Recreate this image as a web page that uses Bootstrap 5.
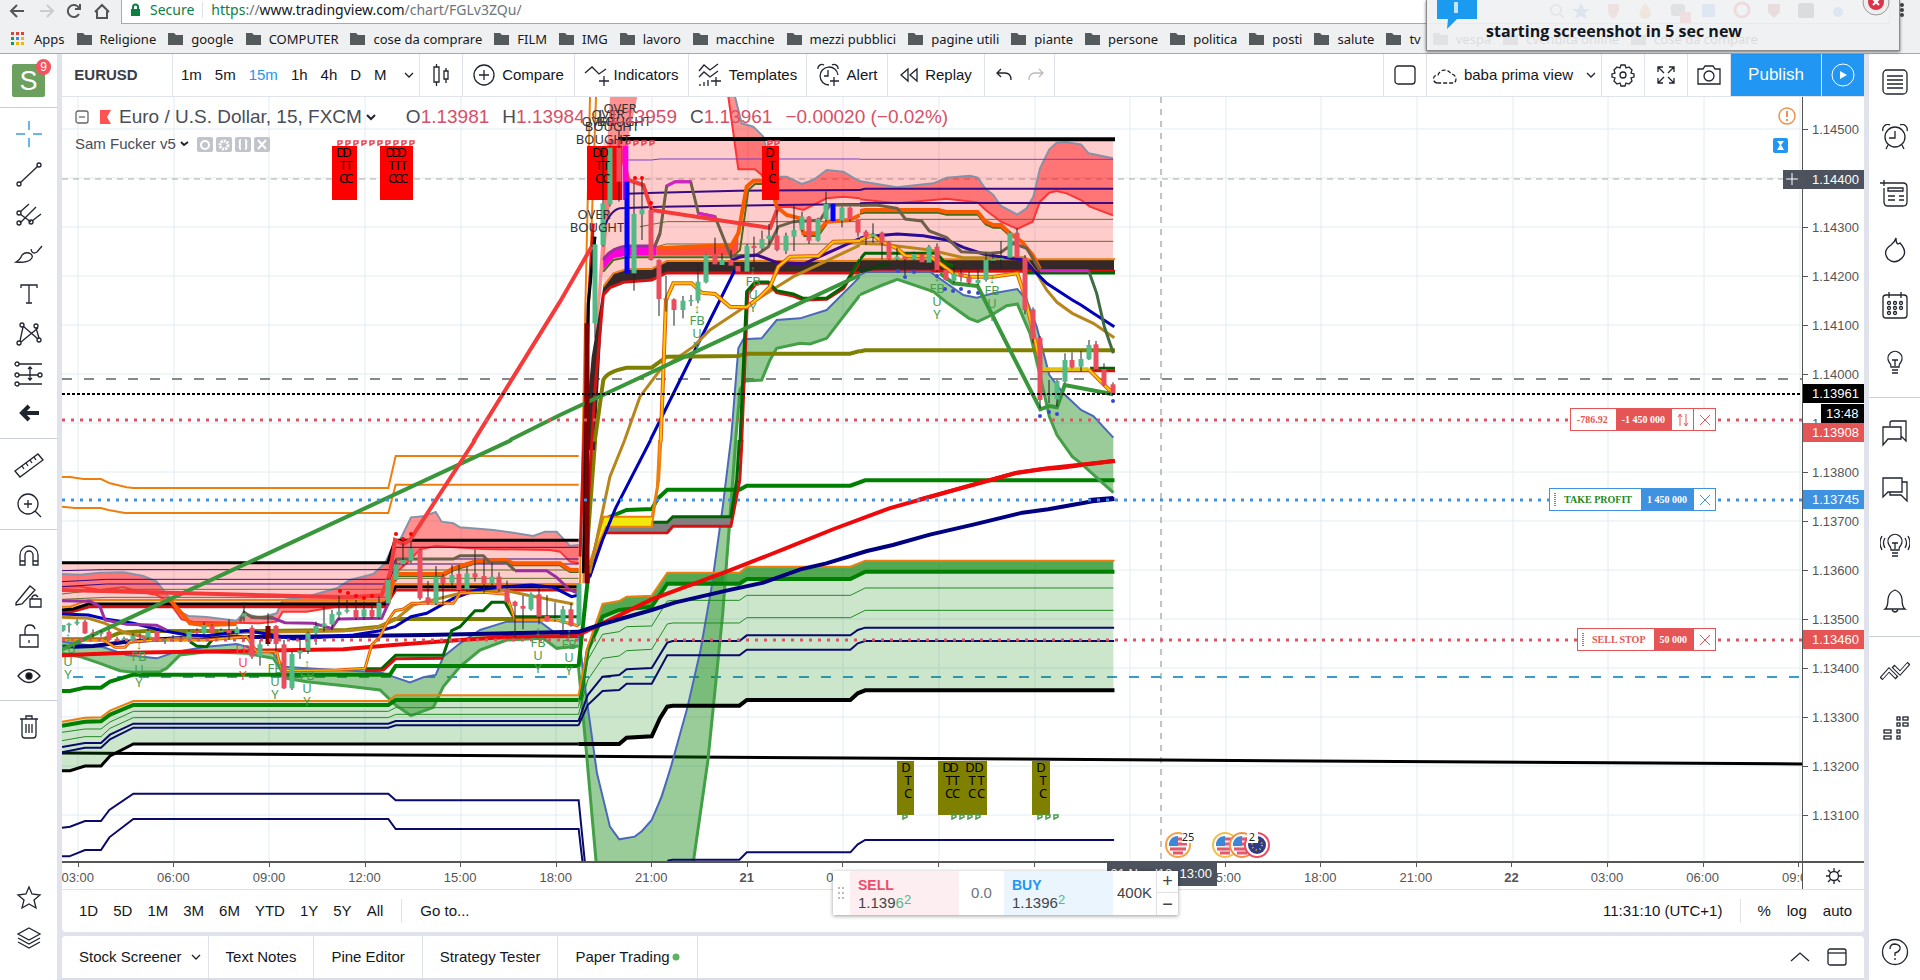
<!DOCTYPE html>
<html lang="en">
<head>
<meta charset="utf-8">
<meta name="viewport" content="width=device-width, initial-scale=1">
<title>EURUSD 1.13961</title>
<link rel="stylesheet" href="https://cdn.jsdelivr.net/npm/bootstrap@5.3.0/dist/css/bootstrap.min.css">
<style>
:root{--gap:#e0e3eb;--ink:#131722;--blue:#2196f3;--up:#53b987;--down:#eb4d5c}
body{font-family:"Liberation Sans",Arial,sans-serif;font-size:15px;line-height:20px;color:var(--ink);background:var(--gap);overflow:hidden}
button{background:none;border:0;padding:0;color:inherit;display:inline-flex;align-items:center;justify-content:center;white-space:nowrap}
svg.ic{fill:none;stroke:#20242f;stroke-width:1.3;flex:none}
/* browser */
.chrome-bar{font-family:"Noto Sans",sans-serif;height:54px;background:#eff0f1;border-bottom:1px solid #a9a9a9}
.address{height:24px;background:#fff;border:1px solid #a9a9a9;border-top:0;margin-left:11px;font-size:14px;padding-bottom:4px}
.address input{border:0;outline:0;background:none;color:transparent;width:1px;padding:0}
.navs{width:110px;padding-left:8px}
.marks{font-size:13px;height:29px;padding-left:11px}
.marks a{color:#16181c;text-decoration:none;white-space:nowrap;display:flex;align-items:center;gap:8px;margin-right:12px}
.notice{right:20px;top:0;width:474px;height:51px;background:rgba(239,241,242,.9);border:1px solid #8b8b8b;border-top:0;box-shadow:0 1px 3px #0008;font-family:"Open Sans",sans-serif;font-weight:700;font-size:16px;z-index:9}
.notice span{left:59px;top:21px}
/* sidebars */
.rail-l{width:57px;background:#fff}
.rail-l button{height:40px;width:100%}
.rail-l hr,.rail-r hr{margin:0;border-color:#c9ced8;width:100%;opacity:1}
.rail-l hr{margin:4px 0 6px}
.rail-l hr.first{margin-top:0}
.rail-r hr{margin:7px 0}
.rail-r{width:51px;background:#fff;margin-left:5px}
.rail-r button{height:56px;width:100%}
.avatar{width:33px;height:33px;background:#6ba05e;color:#fff;font-size:27px;margin:10px 12px;border-radius:2px}
.alerts{left:24px;top:-5px;width:15px;height:16px;border-radius:8px;background:#f7525f;font-size:12px;line-height:16px}
/* toolbar */
.tools{height:43px;background:#fff;border-bottom:1px solid #e0e3eb}
.tools>*{border-right:1px solid #e0e3eb;height:100%}
.tools .b{gap:7px}
.w43{width:43px}
.pub{background:var(--blue);color:#fff;font-size:17px;width:91px}
/* chart */
.pane{background:#fff;min-height:0}
.pane svg.plot{position:absolute;inset:0;width:100%;height:100%}
.legend1{font-size:19px;line-height:24px;color:#4a4d55;padding:8px 0 0 13px;white-space:nowrap}
.legend1 b,.legend2 b{font-weight:400}
.legend1 .v{color:#d75067}
.legend1 .next{padding-left:13px}
.legend2{padding:5px 0 0 13px;color:#4a4d55}
.mini{width:16px;height:15px;background:#c2c4cb;border-radius:2px}
.scale{width:62px;border-left:1px solid #555;font-size:13px;color:#555;background:#fff;padding-top:8px}
.scale p{margin:0;height:49px;line-height:49px;padding-left:9px;position:relative}
.scale p::before{content:"";position:absolute;left:0;top:24px;width:5px;height:1px;background:#555}
.tag{position:absolute;left:0;width:61px;height:19px;line-height:19px;padding-left:9px;color:#fff}
.order{height:23px;font:700 10px/21px "Liberation Serif",serif;right:86px;border:1px solid;background:#fff}
.order>*{padding:0 6px;border-left:1px solid;height:21px;text-align:center;white-space:nowrap}
.order>*:first-child{border-left:0}
.order button{width:22px;padding:0}
.order .q{color:#fff}
.times{height:28px;background:#fff;border-top:2px solid #555;font-size:13px;color:#555}
.times .row-t{margin:0 -44px 0 -32px}
.times .row-t span{flex:1 1 0;text-align:center;line-height:30px;position:relative}
.times .row-t span::before{content:"";position:absolute;left:50%;top:0;width:1px;height:4px;background:#555}
.ranges{height:43px;background:#fff;border-top:1px solid #e0e3eb;border-radius:0 0 4px 4px;padding:0 12px 0 17px}
.ranges .rule{height:24px;margin:0 18px}
.tabs{height:44px;background:#fff;margin-top:4px;border-radius:4px 4px 0 0;border-bottom:2px solid #dadde5}
.tabs>button{height:100%;padding:0 17px;border-right:1px solid #e0e3eb}
.trade{left:771px;bottom:65px;width:345px;height:44px;background:#fff;box-shadow:0 1px 4px #0006;z-index:4}
.trade button{display:block;text-align:left;width:109px;padding-left:8px;line-height:17px;color:#444}
.trade sup{font-size:13px;top:-4px;color:var(--up);line-height:0}
.when{left:1045px;bottom:94px;width:110px;height:25px;background:#4c525e;color:#fff;font-size:13px;line-height:26px;text-align:right;padding-right:5px;z-index:3;white-space:nowrap}
.plot path,.plot line{fill:none;vector-effect:non-scaling-stroke}
.plot .or{stroke:#ee7f0e;stroke-width:2}.plot .pu{stroke:#3a0a80;stroke-width:1}.plot .ol1{stroke:#66702a;stroke-width:1}
.plot .k{stroke:#000;stroke-width:3}.plot .na{stroke:#0a0a6a;stroke-width:2}.plot .g1{stroke:#228b22;stroke-width:1}
.plot .k.top{stroke-width:4}
.plot .gr{stroke:#008000;stroke-width:4}.plot .rd{stroke:#ee0a0a;stroke-width:4}.plot .nv{stroke:#000080;stroke-width:4}
.plot .bl{stroke:#0000b8;stroke-width:3}.plot .ol{stroke:#808000;stroke-width:4}.plot .go{stroke:#b8861b;stroke-width:3}
.plot .bb{stroke:#4c68bd;stroke-width:2}.plot .bg{stroke:#43a047;stroke-width:3}.plot .bu{stroke:#8493a8;stroke-width:2}
.plot .ro{stroke:#f33;stroke-width:2}.plot .zr{stroke:#f63a3a;stroke-width:4}.plot .zg{stroke:#3a963a;stroke-width:4}
.plot .gy{stroke:#6e6048;stroke-width:3}.plot .mg{stroke:#9b2fa0;stroke-width:3}
.plot .ye{stroke:#e25a12;stroke-width:4}.plot .yy{stroke:#ffc800;stroke-width:2}.plot .dg{stroke:#006400;stroke-width:3}.plot .dr{stroke:#d41212;stroke-width:3}
.plot .oo{stroke:#fc5a00;stroke-width:4}.plot .od{stroke:#4f6a14;stroke-width:2}
.plot .fr{fill:#ff0000;fill-opacity:.43}.plot .fp{fill:#ff0000;fill-opacity:.2}.plot .fg{fill:#008000;fill-opacity:.4}.plot .fl{fill:#008000;fill-opacity:.2}
.plot text{font-family:"Noto Sans",sans-serif;font-size:13px}
</style>
</head>
<body class="vh-100 d-flex flex-column">
<header class="chrome-bar flex-shrink-0">
  <div class="d-flex">
    <div class="navs d-flex align-items-center">
      <svg class="ic" width="104" height="22" viewBox="0 0 104 22" style="stroke-width:2"><path d="M16 10H4M9 4l-6 6 6 6M87 11l7-7 7 7M89 10v7h10v-7" stroke="#555"/><path d="M32 10h12M39 4l6 6-6 6" stroke="#ccc"/><path d="M71 7a6 6 0 1 0 0 6M72 3v5h-5" stroke="#555"/></svg>
    </div>
    <label class="address flex-fill d-flex align-items-center ps-2"><svg width="12" height="14" class="me-2"><path d="M1 6h9v7H1z" fill="#0b8043"/><path d="M3 6V4a2.500 2.500 0 0 1 5 0v2" fill="none" stroke="#0b8043" stroke-width="2"/></svg><span style="color:#0b8043">Secure</span><span class="border-start mx-2" style="height:16px"></span><span><span style="color:#0b8043">https</span><span class="text-secondary">://</span>www.tradingview.com<span class="text-secondary">/chart/FGLv3ZQu/</span></span><input aria-label="Address" type="text"></label>
    <svg width="30" height="24"><g fill="#444"><circle cx="12" cy="5" r="2"/><circle cx="12" cy="10" r="2"/><circle cx="12" cy="15" r="2"/></g></svg>
  </div>
  <nav class="marks d-flex align-items-center" id="marks"></nav>
</header>
<svg class="position-absolute" width="330" height="30" style="left:1550px;top:0" aria-hidden="true"><circle cx="6" cy="10" r="5" fill="none" stroke="#888" stroke-width="2"/><path d="M10 14l4 4" stroke="#888" stroke-width="2"/><path d="M31 3l3 6h6l-5 4 2 6-6-3-6 3 2-6-5-4h6z" fill="#3b7de0"/><path d="M58 4h11v6q-1 6-6 9-5-3-5-9z" fill="#e05050"/><path d="M95 3q8 8 5 14-5 4-10 0-2-6 5-14z" fill="#e88a30"/><rect x="121" y="4" width="14" height="12" rx="3" fill="#555"/><rect x="130" y="12" width="11" height="11" fill="#e44"/><rect x="152" y="4" width="13" height="13" fill="#4285f4"/><circle cx="192" cy="10" r="7" fill="none" stroke="#d22" stroke-width="3"/><path d="M218 4h12v8l-6 6-6-6z" fill="#a22"/><rect x="248" y="3" width="16" height="15" rx="2" fill="#222"/><circle cx="288" cy="12" r="5" fill="#4285f4"/></svg>
<div class="notice position-absolute">
  <svg class="position-absolute" width="40" height="30" style="left:10px"><path d="M0 0h40v19H20L10 29l1-10H0z" fill="#1a9bf0"/><rect x="17" y="2" width="4" height="11" fill="#bfe6ff"/></svg>
  <span class="position-absolute">starting screenshot in 5 sec new</span>
  <svg class="position-absolute" width="30" height="20" style="right:8px"><circle cx="15" cy="2" r="13" fill="#eee" stroke="#999"/><circle cx="15" cy="2" r="8" fill="#d93448"/><path d="M12-1l6 6m0-6l-6 6" stroke="#fff" stroke-width="2"/></svg>
</div>

<div class="d-flex flex-fill" style="min-height:0">
  <aside class="rail-l d-flex flex-column flex-shrink-0" id="left"><div class="avatar position-relative d-flex align-items-center justify-content-center flex-shrink-0">S<span class="alerts position-absolute text-center">9</span></div></aside>
  <main class="d-flex flex-column flex-fill position-relative" style="min-width:0;margin-left:5px">
    <div class="tools d-flex flex-shrink-0">
      <button style="width:111px;padding-right:22px;color:#3a3e48" class="fw-bold">EURUSD</button>
      <div class="d-flex align-items-center" style="width:247px;padding-left:8px;gap:13px"><button>1m</button><button>5m</button><button style="color:#2196f3">15m</button><button>1h</button><button>4h</button><button>D</button><button>M</button><button class="ms-1" aria-label="More intervals"><svg class="ic" width="10" height="8"><path d="M1 2l4 4 4-4"/></svg></button></div>
      <button class="w43" aria-label="Bar style"><svg class="ic" width="18" height="24"><path d="M2 4h5v15H2zM4.500 1v3M4.500 19v4M12 8h4v8h-4zM14 5v3M14 16v4"/></svg></button>
      <button class="b" style="width:112px"><svg class="ic" width="22" height="22"><circle cx="11" cy="11" r="10"/><path d="M11 6v10M6 11h10"/></svg>Compare</button>
      <button class="b" style="width:114px;gap:3px"><svg class="ic" width="26" height="24"><path d="M1 10l7-6 7 7 7-5M20 13v10M15 18h10"/></svg>Indicators</button>
      <button class="b" style="width:118px"><svg class="ic" width="24" height="24"><path d="M1 8l5-6 6 5 8-6M1 14l5-5 6 5 8-6M2 23v-2M6 23v-4M10 23v-6M18 14v9M13 18h10"/></svg>Templates</button>
      <button class="b" style="width:81px"><svg class="ic" width="23" height="24"><path d="M12 22a9 9 0 1 1 9-10M11 7v6H7M1 6a4 4 0 0 1 6-4M15 2a4 4 0 0 1 6 4M17 14v9M13 18h9"/></svg>Alert</button>
      <button class="b" style="width:97px"><svg class="ic" width="18" height="16"><path d="M8 2v12L1 8zM17 2v12l-7-6z"/></svg>Replay</button>
      <div class="d-flex align-items-center gap-3 px-2 justify-content-center" style="width:70px"><button aria-label="Undo"><svg class="ic" width="16" height="14"><path d="M5 1L1 5l4 4M1 5h8q6 0 6 7"/></svg></button><button aria-label="Redo"><svg class="ic" style="stroke:#bbb" width="16" height="14"><path d="M11 1l4 4-4 4M15 5H7Q1 5 1 12"/></svg></button></div>
      <div class="flex-fill"></div>
      <button class="w43" aria-label="Layout"><svg class="ic" width="22" height="20"><rect x="1" y="1" width="20" height="18" rx="3"/></svg></button>
      <button style="width:175px;gap:5px"><svg class="ic" width="27" height="18" stroke-dasharray="4 2"><path d="M5 17a4 4 0 0 1 1-8 7 7 0 0 1 13-1 5 5 0 0 1 3 9z"/></svg>baba prima view<svg class="ic ms-2" width="10" height="8"><path d="M1 2l4 4 4-4"/></svg></button>
      <button class="w43" aria-label="Settings"><svg class="ic" width="24" height="24" viewBox="0 0 24 24"><circle cx="12" cy="12" r="3"/><path d="M10 2h4l1 3 3-1 3 3-1 3 3 1v3l-3 1 1 3-3 3-3-1-1 3h-4l-1-3-3 1-3-3 1-3-3-1v-3l3-1-1-3 3-3 3 1z"/></svg></button>
      <button class="w43" aria-label="Full screen"><svg class="ic" width="20" height="20"><path d="M2 7V2h5M2 2l6 6M13 2h5v5M18 2l-6 6M2 13v5h5M2 18l6-6M18 13v5h-5M18 18l-6-6"/></svg></button>
      <button class="w43" aria-label="Snapshot"><svg class="ic" width="24" height="20"><path d="M1 4h5l2-3h8l2 3h5v15H1z"/><circle cx="12" cy="11" r="5"/></svg></button>
      <button class="pub">Publish</button>
      <button class="pub border-0" style="width:42px" aria-label="Play"><svg width="24" height="24"><circle cx="12" cy="12" r="11" fill="none" stroke="#fff"/><path d="M9 8l7 4-7 4z" fill="#fff"/></svg></button>
    </div>

    <div class="d-flex flex-fill" style="min-height:0">
      <section class="pane flex-fill position-relative overflow-hidden">
        <svg class="plot"><defs><clipPath id="eve"><rect x="60" y="0" width="800" height="1200"/></clipPath><clipPath id="aft"><rect x="-400" y="-100" width="1300" height="1700"/></clipPath></defs><g transform="translate(-62 -97)">
          <g id="grid"></g>
          <!-- horizontal levels -->
          <path d="M62 179H1802" stroke="#aaa" stroke-dasharray="6 5"/>
          <path d="M1161 97V862" stroke="#888" stroke-dasharray="6 6"/>
          <path d="M62 379H1802" stroke="#888" stroke-width="2" stroke-dasharray="10 12"/>
          <path d="M73 677H1802" stroke="#3a9bd0" stroke-width="2" stroke-dasharray="10 12"/>
          <path d="M60 753L1802 764" class="k"/>

          <!-- overnight session -->
          <g transform="translate(60 440) scale(.33333)">
            <path class="fp" d="M6 368H983L1005 301H1556V440H1007L985 492H85L6 510z"/>
            <path class="fr" d="M6 402L60 404 120 398 190 397 250 408 290 425 330 475 360 515 385 528 440 531 530 542 550 520 600 533 650 520 668 480 740 470 830 445 870 420 940 402 975 370 1007 300 1020 300 1053 232 1090 229 1127 216 1145 245 1180 250 1200 262 1300 270 1350 277 1420 288 1455 275 1490 275 1530 318 1556 315V370L1530 365 1500 335 1470 330 1270 327 1127 318 1080 328 1050 360 1007 400 985 480 940 500 830 500 740 515 668 515 650 545 600 550 400 545 365 538 330 490 290 465 240 455 190 442 120 450 60 440 6 440z"/>
            <path class="bu" d="M6 402L60 404 120 398 190 397 250 408 290 425 330 475 360 515 385 528 440 531 530 542 550 520 600 533 650 520 668 480 740 470 830 445 870 420 940 402 975 370 1007 300 1020 300 1053 232 1090 229 1127 216 1145 245 1180 250 1200 262 1300 270 1350 277 1420 288 1455 275 1490 275 1530 318 1556 315"/>
            <path class="ro" d="M1556 370L1530 365 1500 335 1470 330 1270 327 1127 318 1080 328 1050 360 1007 400 985 480 940 500 830 500 740 515 668 515 650 545 600 550 400 545 365 538 330 490 290 465 240 455 190 442 120 450 60 440 6 440"/>
            <path class="fl" d="M6 845L75 833 123 832 150 812 220 783H985L1007 766H1556V912H220L150 948 123 978H75L30 992H6z"/>
            <path class="fg" d="M6 605L130 622 200 645 290 655 350 635 440 620 530 612 560 620 640 640 670 680 740 685 830 690 960 697 990 707 1050 727 1090 712 1127 705 1150 650 1200 610 1260 570 1340 545 1440 545 1480 575 1556 575V618L1490 625 1450 595 1340 600 1260 630 1200 680 1150 740 1120 802 1053 827 1007 795 960 750 860 738 740 725 680 715 640 655 560 640 440 635 360 645 320 685 300 695 220 697 180 692 120 670 60 650 6 640z"/>
            <path class="bb" d="M6 605L130 622 200 645 290 655 350 635 440 620 530 612 560 620 640 640 670 680 740 685 830 690 960 697 990 707 1050 727 1090 712 1127 705 1150 650 1200 610 1260 570 1340 545 1440 545 1480 575 1556 575"/>
            <path class="bg" d="M1556 618L1490 625 1450 595 1340 600 1260 630 1200 680 1150 740 1120 802 1053 827 1007 795 960 750 860 738 740 725 680 715 640 655 560 640 440 635 360 645 320 685 300 695 220 697 180 692 120 670 60 650 6 640"/>
            <path class="or" d="M6 111H30L70 117H123L150 130 200 142 220 144H985L1007 48H1556M6 200L45 204H123L145 210 195 219H985L1007 134H1556"/>
            <path class="k" d="M6 368H983L1005 301H1556"/>
            <path class="pu" d="M6 392L130 389H990L1007 322H1556M6 425L140 418H985L1007 357H1556M6 440L140 432H985L1007 372H1556"/>
            <path class="ol1" d="M6 462L130 448H985L1007 390H1556M6 478L140 472H985L1007 415H1556"/>
            <path class="or" d="M6 500H30L85 480H985L1007 432H1556"/>
            <path class="dr" d="M6 518L40 514 90 500H975L1007 450H1556"/>
            <path class="k" d="M6 510L40 507 85 492H975L1007 440H1556"/>
            <path class="rd" d="M6 646L200 638 530 633 850 628 1000 615 1200 600 1350 590 1556 588"/>
            <path class="nv" d="M6 622L100 618 200 605 300 598 400 592 700 590 1100 585 1556 575"/>
            <path class="ol" d="M6 598H130L180 578 260 573 600 573 860 570 960 560 1005 537H1460"/>
            <path class="go" d="M6 532L85 535 135 550 200 580 300 600 560 577 850 573 940 565 1005 540 1060 495 1200 460 1330 450 1400 465 1540 492"/>
            <path class="bl" d="M6 522L85 525 135 537 220 550 300 570 380 585 440 587 560 572 640 585 700 597 800 590 880 585 960 572 1005 560 1053 530 1100 520 1180 475 1250 450 1330 440 1415 435 1480 442 1535 470 1556 465"/>
            <path class="od" d="M985 496L1005 408H1150L1180 391 1250 369 1335 366 1360 376H1500L1530 396H1556"/>
            <path class="oo" d="M330 480L365 520 390 550 430 555 530 552M985 490L1005 402H1150L1180 385 1250 363 1335 360 1360 370H1500L1530 390H1556"/>
            <path class="mg" d="M6 482L90 484 120 500 135 540 200 553 290 556 320 570M575 532L640 535 675 548 760 550 815 565 835 537 965 535 985 490M1365 392H1460L1490 412 1530 450 1556 460"/>
            <path class="gy" d="M540 545L552 517 575 532H640M1007 357H1180L1200 347H1270L1290 368H1340L1365 392"/>
            <path class="dg" d="M390 605L410 618 440 620 460 595M915 686H965L1007 646H1150L1175 572 1200 560 1245 512H1270L1295 487H1335L1360 530H1556"/>
            <path class="dr" d="M915 692L970 690 1007 656 1150 655"/>
            <path class="ye" style="stroke-width:3" d="M6 600H130L165 622H195L210 605 300 600H440L560 590 590 635H650L665 692 830 690 915 685 935 615 960 590 985 540 1005 512 1030 507 1055 490H1180L1200 460 1270 457 1340 463 1365 540H1490L1556 558"/>
            <path class="yy" style="stroke-width:1" d="M6 600H130L165 622H195L210 605 300 600H440L560 590 590 635H650L665 692 830 690 915 685 935 615 960 590 985 540 1005 512 1030 507 1055 490H1180L1200 460 1270 457 1340 463 1365 540H1490L1556 558"/>
            <path class="gr" d="M6 753H30L75 743H123L150 725 220 704H990L1007 678H1556M6 857L75 845 123 844 150 824 220 795H985L1007 780H1556"/>
            <path class="or" d="M6 845L75 833 123 832 150 812 220 783H985L1007 766H1556"/>
            <path class="g1" d="M6 877L75 867H123L150 846 220 814H985L1007 803H1556M6 902L75 890H123L150 865 220 833H985L1007 823H1556"/>
            <path class="na" d="M6 921L75 909H123L150 884 220 851H985L1007 843H1556M6 937L75 923H123L150 898 220 863H985L1007 856H1556M6 1163L30 1160 75 1143H123L148 1110 220 1061H985L1007 1081H1556L1575 1270M6 1249H28L75 1230H123L148 1192 220 1137H985L1007 1167H1556L1568 1270"/>
            <path class="k" d="M6 992H30L75 978H123L150 948 220 912H1556"/>
            <path class="zg" d="M6 628L1355 0"/>
            <path class="zr" d="M6 450L860 472 965 466 990 400 1005 300 1030 312 1050 300 1245 0"/>
          </g>

          <!-- breakout and afternoon, lower half -->
          <g transform="translate(560 440) scale(.3699 .33333)">
            <path class="fl" d="M50 766L75 620 115 492 160 483 180 470 248 467 290 398H485L505 380H785L825 362H1496V750H825L785 780H505L485 797H305L290 800 248 890 180 893 160 912H50z"/>
            <path d="M75 620L115 492 160 483 180 470 248 467 290 398H485L505 380H785L825 362H1496V395H825L785 417H505L485 431H290L248 500 160 510 115 530 75 640z" style="fill:#008000;fill-opacity:.6"/>
            <path class="fg" d="M50 580L70 760 100 1000 135 1160 160 1198 202 1190 248 1140 300 980 345 800 380 630 410 440 440 200 462 0H490L462 260 440 520 400 960 360 1270H98L70 920z"/>
            <path class="bb" d="M50 580L70 760 100 1000 135 1160 160 1198 202 1190 222 1173 248 1140 275 1070 300 980 345 800 380 630 410 440 440 200 462 0"/>
            <path class="bg" d="M50 680L70 920 98 1270M360 1270L400 960 440 520 475 0"/>
            <path class="gr" d="M50 680L75 420 115 240 180 210 248 207 265 175 290 149H485L505 137H785L825 121H1499M55 780L75 630 115 530 160 510 248 500 290 431H485L505 417H785L825 395H1499"/>
            <path class="or" d="M50 766L75 620 115 492 160 483 180 470 248 467 290 398H485L505 380H785L825 362H1499"/>
            <path class="g1" d="M50 800L75 660 115 583 160 575 180 560 248 558 290 483 305 481H485L505 466H785L825 444H1496M50 823L75 720 115 655 160 648 180 632 248 628 290 552 305 549H485L505 533H785L825 511H1496"/>
            <path class="na" d="M50 843L75 765 115 710 160 705 180 688 248 684 290 608 305 603H485L505 586H785L805 570 825 563H1498M50 856L75 795 115 753 160 750 180 731H248L290 646H485L505 629H785L805 610 825 603H1498M290 1262L305 1259H485L505 1237H785L805 1213 825 1200H1498"/>
            <path class="k top" d="M50 912H160L180 893 248 889 270 835 290 800 305 797H485L505 780H785L805 760 825 751H1499"/>
            <path d="M115 270L130 247H290L305 230H462V258H305L290 274H130z" style="fill:#808080"/>
            <path class="dr" d="M80 410L100 340 118 278H290L305 259H462L486 120 492 0"/><path class="dg" d="M118 247H290L305 230H462L478 120 485 0"/>
            <path d="M80 370L100 300 118 230H248V260H125L105 310 82 400z" style="fill:#f2e90c"/>
            <path class="or" d="M80 370L100 300 118 230H248L262 140 268 0M82 405L105 310 125 260H248L268 120 274 0"/>
            <path class="bl" d="M80 412L115 300 150 205 245 0"/><path class="go" d="M80 400L135 110 175 0"/><path class="ol" d="M72 340L95 0"/>
            <path class="rd" d="M50 585L115 550 248 478 450 395 565 345 610 325 740 267 830 230 890 205 980 177 1110 136 1235 98 1310 86 1350 84 1499 62"/>
            <path class="nv" d="M0 578L50 576 115 552 248 510 310 488 450 452 550 428 650 388 720 370 830 333 900 315 1000 284 1120 253 1250 218 1320 208 1440 184 1499 177"/>
          </g>

          <!-- breakout and afternoon, upper half -->
          <g transform="translate(560 90) scale(.33333)"><g clip-path="url(#aft)">
            <path class="fp" d="M130 150H900V515H310L270 535 190 540 130 590z"/>
            <path class="fr" d="M140 200L150 20H232L195 190 150 330 95 900zM505 20H525L545 100 580 110 610 140 640 260 680 260 725 282 760 270 800 240 850 245 900 275V325L850 320 800 325 730 360 690 350 655 352 605 255 585 238H535z"/>
            <path class="bu" d="M525 20L545 100 580 110 610 140 640 260 680 260 725 282 760 270 800 240 850 245 900 275"/>
            <path class="ro" d="M505 20L535 238H585L605 255 655 352 690 350 730 360 800 325 850 320 900 325"/>
            <path class="fg" d="M513 1050L535 775 550 748 605 745 650 690 720 685 800 660 900 560V615L800 745 750 762 720 760 650 775 630 810 605 870 555 873 540 900 527 1050z"/>
            <path class="bb" d="M513 1050L535 775 550 748 605 745 650 690 720 685 800 660 900 560"/><path class="bg" d="M527 1050L540 900 555 873 605 870 630 810 650 775 720 760 750 762 800 745 900 615"/>
            <path class="pu" d="M200 210H275L300 207H900" style="stroke:#7b3fc4"/><path class="pu" style="stroke-width:2" d="M200 311L290 308 535 302 900 300M130 420Q150 360 180 355L300 350 900 342"/>
            <path class="ol1" d="M240 410L320 395H900M290 470L320 462H900"/>
            <path d="M130 500L160 475 200 467H290V497H200L160 505 130 540z" style="fill:#f0d"/>
            <path d="M290 475L515 467 535 430V480L515 497H290z" style="fill:#ff4a43"/>
            <path class="od" d="M130 545L160 510 200 502H515L540 480 565 300 585 282H630M730 438H775L800 402"/>
            <path class="oo" d="M290 475L515 465 535 430 560 290 580 272H630L650 350 680 375 720 385 730 430H770L800 395 870 390 900 375"/>
            <path class="mg" d="M130 510Q150 475 200 468H285L300 430"/><path class="gy" d="M285 468L300 430 320 288 345 275H392L415 370 465 380 512 498 590 495 625 470 655 410 700 395 780 390 810 345H900"/>
            <path class="mg" style="stroke:#d420c8" d="M320 288L345 275H392M415 370L465 380"/>
            <path d="M70 1080L95 800 130 590 160 550 200 537H275L320 513H900V547H320L275 568 190 575 150 590 130 610 105 1080z" style="fill:#352828"/>
            <path class="or" d="M60 1480L75 700 90 20M70 1480L85 700 108 20M130 590L160 550 200 537H275L320 513H900"/>
            <path class="dr" d="M75 1400L105 900 130 615 150 593 190 577 275 570 320 549H900M60 1400L85 640 100 400"/>
            <path class="k" d="M70 1450L85 640 105 440"/><path class="k top" d="M175 147H900"/>
            <path class="bl" d="M271 1050L405 780 525 540"/><path class="bl" style="stroke:#3a0a90" d="M515 510L545 500 590 495 650 517 730 522 800 490 900 445"/>
            <path class="go" d="M194 1050L240 920 300 840 400 770 450 720 540 660 700 560 900 465"/>
            <path class="ol" d="M104 1055L130 870Q140 845 200 833H275L320 800 535 798 560 791H870L900 783"/>
            <path class="dr" d="M545 1055L563 612 590 580H625L650 608 700 618 730 630 800 628 850 596 900 515"/>
            <path class="dg" d="M540 1055L560 605 585 576H625L650 602 700 612 730 625 800 624 850 590 900 508"/>
            <path class="ye" d="M302 1055L318 630 340 580H395L425 608 465 612 510 650 560 652 600 620 630 590 655 530 690 500 775 498 820 455 900 453"/>
            <path class="yy" d="M302 1055L318 630 340 580H395L425 608 465 612 510 650 560 652 600 620 630 590 655 530 690 500 775 498 820 455 900 453"/>
            <path class="zg" d="M-150 1050L0 975 900 555"/>
            <path class="zr" d="M-260 1055L0 635 95 470M180 170L205 270 250 285 275 360 630 414 655 350"/>
            <path d="M188 167H205V330H188z" style="fill:#f0d"/>
          </g></g>

          <!-- evening -->
          <g transform="translate(840 130) scale(.33333)"><g clip-path="url(#eve)">
            <path class="fp" d="M0 28H819V388H0z"/>
            <path class="fr" d="M0 122L53 152 170 172 280 160 320 143 390 137 413 143 437 177 460 195 483 228 532 254 560 235 580 200 600 115 628 58 650 38 680 37 723 43 746 70 819 85V256L750 230 723 210 680 190 650 183 628 188 600 215 578 275 532 297 483 275 437 240 413 217 320 206 170 220 0 202z"/>
            <path class="bu" d="M0 122L53 152 170 172 280 160 320 143 390 137 413 143 437 177 460 195 483 228 532 254 560 235 580 200 600 115 628 58 650 38 680 37 723 43 746 70 819 85"/>
            <path class="ro" d="M819 256L750 230 723 210 680 190 650 183 628 188 600 215 578 275 532 297 483 275 437 240 413 217 320 206 170 220 0 202"/>
            <path class="pu" style="stroke:#7b3fc4" d="M0 88H820"/><path class="pu" style="stroke-width:2" d="M0 180H60L75 176H820M0 222L75 219H820"/>
            <path class="ol1" d="M0 272L60 268H820M0 334H820"/>
            <path d="M0 390H822V424H0z" style="fill:#352828"/><path class="or" d="M0 388H825"/><path class="dr" d="M0 424H825"/><path class="dg" d="M555 429H825"/>
            <path class="k top" d="M0 28H825"/>
            <path class="fg" d="M0 495L50 440 80 425H270L320 460 370 495 410 503 460 490 532 477 560 510 590 590 628 735 670 790 723 840 760 858 820 923V1088L723 1000 697 980 651 915 628 860 601 740 570 610 532 522 500 527 455 555 413 575 387 565 317 515 280 485 172 448 120 468 53 497 0 570z"/>
            <path class="bb" d="M0 495L50 440 80 425H270L320 460 370 495 410 503 460 490 532 477 560 510 590 590 628 735 670 790 723 840 760 858 820 923"/>
            <path class="bg" d="M820 1088L723 1000 697 980 651 915 628 860 601 740 570 610 532 522 500 527 455 555 413 575 387 565 317 515 280 485 172 448 120 468 53 497 0 570"/>
            <path class="ol" d="M0 671H30L75 661H825"/>
            <path class="go" d="M0 355L50 340 120 342 270 360 370 383H555L590 430 620 480 651 517 697 550 760 580 823 623"/>
            <path class="bl" style="stroke:#2a0a9a" d="M0 345L75 320 172 312 250 317 320 330 370 352 430 372 510 385 555 390 585 425"/><path class="bl" d="M585 425L620 460 697 510 723 525 760 550 823 590"/>
            <path class="od" d="M30 258L75 248H295L320 254H413L437 283 460 293H483L510 318"/>
            <path class="oo" d="M0 260L30 250 75 240H295L320 246H413L437 275 460 285H483L510 310 545 335 578 375 600 417"/>
            <path class="gy" d="M0 228L110 225 172 235 196 267 245 273 268 303 320 323 364 365 450 370 483 367 520 340 560 355 600 420"/>
            <path class="gy" style="stroke:#3f6b45" d="M746 422L770 490 793 590 820 670"/>
            <path style="stroke:#e01fc4;stroke-width:3" d="M600 422H746"/>
            <path class="dg" d="M0 450L30 440 50 400 75 370H290L317 400 340 408M750 715H825"/><path class="dr" d="M600 722H825"/>
            <path style="stroke:#e0c010;stroke-width:4" d="M605 718H746"/>
            <path class="ye" d="M0 330H60L99 315 125 335 172 355 196 378H268L300 400 340 430 387 440 460 440 532 430 555 500 601 700M746 718L793 765 820 792"/>
            <path class="yy" d="M0 330H60L99 315 125 335 172 355 196 378H268L300 400 340 430 387 440 460 440 532 430 555 500 601 700M746 718L793 765 820 792"/>
            <path class="zg" d="M300 430L340 460 413 468 520 680 601 838 628 828 651 832 674 765 820 793"/>
            <path class="zg" d="M0 440L150 400" style="stroke:#123c12"/>
            <path d="M746 1110L820 1104" class="nv"/>
          </g></g>
          <path class="rd" d="M918 500L1016 473 1050 468 1115 461"/>
          <g id="candles"></g>
          <path d="M62 394H1802" stroke="#000" stroke-width="2" stroke-dasharray="3 2"/>
          <path d="M62 420H1802M62 640H1802" stroke="#dd5562" stroke-width="3" stroke-dasharray="3 6"/>
          <path d="M62 500H1802" stroke="#3f92e0" stroke-width="3" stroke-dasharray="3 6"/>
          <g id="notes"></g>
          <g id="events"></g>
          <circle cx="1787" cy="116" r="8" fill="#fff" stroke="#f09050" stroke-width="1.5"/><path d="M1787 111v6m0 2v2" stroke="#f09050" stroke-width="2"/>
          <rect x="1773" y="138" width="15" height="15" rx="2" fill="#2196f3"/><path d="M1777 141h7l-3 4 3 5h-7l3-5z" style="fill:#fff"/>
          <rect x="1783" y="170" width="19" height="19" fill="#4c525e"/><path d="M1792 173v12M1786 179h12" stroke="#fff"/>
        </g></svg>
        <div class="position-relative">
          <div class="legend1 d-flex align-items-center"><svg class="ic" style="stroke:#666" width="14" height="14"><rect x="1" y="1" width="12" height="12" rx="2"/><path d="M4 7h6"/></svg><svg width="14" height="14" class="mx-2"><path d="M3 0h11l-4 7 4 7H3z" fill="#ff5252"/></svg><span>Euro / U.S. Dollar, 15, FXCM</span><svg class="ic me-4 ms-1" width="12" height="8"><path d="M1 2l4 4 4-4" stroke-width="2"/></svg>
            <span class="ms-1">O<b class="v">1.13981</b></span><span class="next">H<b class="v">1.13984</b></span><span class="next">L<b class="v">1.13959</b></span><span class="next">C<b class="v">1.13961</b></span><span class="v next">−0.00020 (−0.02%)</span></div>
          <div class="legend2 d-flex align-items-center"><span>Sam Fucker v5</span><svg class="ic ms-1" width="9" height="8"><path d="M1 2l3 3 4-3" stroke-width="2"/></svg>
            <span class="d-flex ms-2" style="gap:3px"><svg class="mini"><circle cx="8" cy="8" r="4" fill="none" stroke="#fff" stroke-width="2"/></svg><svg class="mini"><circle cx="8" cy="8" r="4" fill="none" stroke="#fff" stroke-width="3" stroke-dasharray="2 1"/></svg><svg class="mini" fill="none"><path d="M6 3Q4 3 5 7 4 12 6 12M10 3q2 0 1 4 1 5-1 5" stroke="#fff" stroke-width="2"/></svg><svg class="mini"><path d="M4 3l8 9m0-9l-8 9" stroke="#fff" stroke-width="2"/></svg></span></div>
        </div>
        <div class="order position-absolute d-flex" style="top:311px;color:#e55555"><span style="padding-right:7px">-786.92</span><span class="q" style="background:#e55555">-1 450 000</span><button aria-label="Reverse"><svg width="12" height="14" fill="none" stroke="currentColor"><path d="M3 13V1L1 4m2-3l2 3M9 1v12l-2-3m2 3l2-3"/></svg></button><button aria-label="Close"><svg width="10" height="10" stroke="currentColor"><path d="M0 0l10 10M10 0L0 10"/></svg></button></div>
        <div class="order position-absolute d-flex" style="top:391px;color:#3f92e0"><span style="color:#1c8a1c;padding-left:14px;padding-right:8px;border-left:0" class="position-relative"><svg class="position-absolute" style="left:4px;top:4px" width="3" height="14"><path d="M1 0v14" stroke="#3f92e0" stroke-width="2" stroke-dasharray="1 1"/></svg>TAKE PROFIT</span><span class="q" style="background:#3f92e0">1 450 000</span><button aria-label="Cancel take profit"><svg width="10" height="10" stroke="currentColor"><path d="M0 0l10 10M10 0L0 10"/></svg></button></div>
        <div class="order position-absolute d-flex" style="top:531px;color:#e55555"><span style="padding-left:14px;padding-right:7px" class="position-relative"><svg class="position-absolute" style="left:4px;top:4px" width="3" height="14"><path d="M1 0v14" stroke="#e55555" stroke-width="2" stroke-dasharray="1 1"/></svg>SELL STOP</span><span class="q" style="background:#e55555">50 000</span><button aria-label="Cancel stop"><svg width="10" height="10" stroke="currentColor"><path d="M0 0l10 10M10 0L0 10"/></svg></button></div>
      </section>
      <div class="scale position-relative flex-shrink-0 overflow-hidden" id="scale">
        <span class="tag" style="top:73px;background:#4c525e">1.14400</span>
        <span class="tag" style="top:287px;background:#000">1.13961</span>
        <span class="tag" style="top:307px;left:18px;width:43px;padding-left:5px;background:#000">13:48</span>
        <span class="tag" style="top:326px;background:#e55555">1.13908</span>
        <span class="tag" style="top:393px;background:#3f92e0">1.13745</span>
        <span class="tag" style="top:533px;background:#e55555">1.13460</span>
      </div>
    </div>
    <div class="times d-flex flex-shrink-0"><div class="flex-fill overflow-hidden"><div class="row-t d-flex" id="times"></div></div><button style="width:62px;border-left:1px solid #555" aria-label="Axis settings"><svg class="ic" width="16" height="16"><circle cx="8" cy="8" r="4.500"/><path d="M8 0v3M8 13v3M0 8h3M13 8h3M2 2l3 3M11 11l3 3M2 14l3-3M11 5l3-3"/></svg></button></div>
    <div class="ranges d-flex align-items-center flex-shrink-0"><div class="d-flex" style="gap:15px"><button>1D</button><button>5D</button><button>1M</button><button>3M</button><button>6M</button><button>YTD</button><button>1Y</button><button>5Y</button><button>All</button></div><span class="border-start rule"></span><button>Go to...</button><button class="ms-auto">11:31:10 (UTC+1)</button><span class="border-start rule me-0"></span><button class="ms-3">%</button><button class="ms-3">log</button><button class="ms-3">auto</button></div>
    <div class="tabs d-flex flex-shrink-0 align-items-center"><button style="padding-right:6px">Stock Screener<svg class="ic ms-2" width="12" height="8"><path d="M2 2l4 4 4-4"/></svg></button><button>Text Notes</button><button>Pine Editor</button><button>Strategy Tester</button><button>Paper Trading<svg width="10" height="8"><circle cx="6" cy="4" r="3.500" fill="#5bb360"/></svg></button><span class="flex-fill"></span><button class="border-0" aria-label="Expand"><svg class="ic" width="20" height="12"><path d="M1 10l9-8 9 8"/></svg></button><button class="border-0 ps-0" aria-label="Maximize"><svg class="ic" width="20" height="18"><rect x="1" y="1" width="18" height="16" rx="2"/><path d="M1 5h18"/></svg></button></div>

    <div class="when position-absolute overflow-hidden">21 Nov '18&nbsp; 13:00</div>
    <div class="trade position-absolute d-flex"><span style="width:17px"><svg width="17" height="44"><path d="M6 16v14M10 16v14" stroke="#bbb" stroke-width="2" stroke-dasharray="2 3"/></svg></span>
      <button style="background:#fdeef1"><b style="color:#eb4d6c;font-size:14px">SELL</b><br>1.139<span style="color:#53b987">6</span><sup>2</sup></button>
      <span class="text-center text-secondary" style="width:45px;line-height:44px">0.0</span>
      <button style="background:#ebf5fd"><b style="color:#2196f3;font-size:14px">BUY</b><br>1.1396<sup>2</sup></button>
      <span class="text-center" style="width:43px;line-height:44px;color:#444">400K</span>
      <span class="d-flex flex-column border-start" style="width:22px"><button class="w-100 p-0 text-center border-bottom" style="height:22px;font-size:18px">+</button><button class="w-100 p-0 text-center" style="height:22px;font-size:18px">−</button></span></div>
  </main>
  <aside class="rail-r d-flex flex-column flex-shrink-0" id="right"></aside>
</div>

<script src="https://cdn.jsdelivr.net/npm/bootstrap@5.3.0/dist/js/bootstrap.bundle.min.js"></script>
<script>
const $=id=>document.getElementById(id), add=(id,h)=>$(id).insertAdjacentHTML('beforeend',h);
// bookmarks
const folder='<svg width="15" height="13"><path d="M0 1h6l2 2h7v10H0z" fill="#555a5c"/></svg>';
let dots='';['#db4437','#db4437','#db4437','#0f9d58','#4285f4','#f4b400','#0f9d58','#f4b400','#f4b400'].forEach((c,i)=>dots+=`<rect x="${i%3*5}" y="${(i/3|0)*5}" width="3" height="3" fill="${c}"/>`);
add('marks',`<a href="#"><svg width="15" height="13">${dots}</svg>Apps</a>`+['Religione','google','COMPUTER','cose da comprare','FILM','IMG','lavoro','macchine','mezzi pubblici','pagine utili','piante','persone','politica','posti','salute','tv','vespa','cvendita online','cose da compare'].map(t=>`<a href="#">${folder}${t}</a>`).join(''));
// sidebars
const btn=(d,n)=>`<button aria-label="${n}"><svg class="ic" width="30" height="28" viewBox="0 0 30 28">${d}</svg></button>`;
add('left','<hr class="first">'+[
['<path stroke="#6bb4f2" stroke-width="2" d="M15 1v9M15 18v9M2 14h9M19 14h9"/>','Cross'],
['<path d="M6 23L24 6"/><circle cx="5" cy="24" r="2"/><circle cx="25" cy="5" r="2"/>','Trend line'],
['<path d="M6 12L15 4M6 23L22 7M18 21l9-7M6 14l11 8"/><circle cx="5" cy="13" r="2"/><circle cx="5" cy="23" r="2"/><circle cx="17" cy="22" r="2"/>','Pitchfork'],
['<path d="M2 22q4-2 6-7 4-4 9-1 3 3-1 6-4 3-14 2zM17 9q1 6 6 3l5-6"/>','Brush'],
['<path d="M7 8V5h16v3M15 5v18M12 23h6"/>','Text'],
['<path d="M9 7L6 21M7 22l17-14M9 6l15 13M22 8l3 10"/><circle cx="8" cy="5" r="2"/><circle cx="22" cy="6" r="2"/><circle cx="5" cy="23" r="2"/><circle cx="25" cy="20" r="2"/>','Pattern'],
['<path d="M5 4h23M5 15h19M5 24h23M16 7v5M16 12v8M14 9l2-2 2 2M14 18l2 2 2-2"/><circle cx="3" cy="4" r="2"/><circle cx="3" cy="15" r="2"/><circle cx="3" cy="24" r="2"/><circle cx="26" cy="15" r="2"/>','Forecast'],
['<path stroke-width="4" d="M25 13H8M15 6l-7 7 7 7"/>','Arrow'],0,
['<path d="M1 20L24 3l5 6L6 26zM8 15l2 3M12 12l2 3M16 9l2 3M20 6l2 3"/>','Measure'],
['<circle cx="14" cy="13" r="10"/><path d="M14 9v8M10 13h8M21 20l6 6"/>','Zoom'],0,
['<path d="M6 23V13a9 9 0 0 1 18 0v10h-5V13a4 4 0 0 0-8 0v10zM6 19h5M19 19h5"/>','Magnet'],
['<path d="M2 21L16 4l5 4L8 22l-6 1zM16 17h11v8H16zM18 17v-2q3-4 6 0"/>','Lock drawing'],
['<path d="M6 13h18v12H6zM11 13V8q0-5 5-5 4 0 5 4M15 18v3"/>','Lock'],
['<path d="M4 14q11-13 22 0-11 13-22 0z"/><circle cx="15" cy="14" r="3" fill="#111"/>','Hide'],0,
['<path d="M6 6h18M8 6v16q0 3 3 3h8q3 0 3-3V6M12 6V3h6v3M12 11v9M15 11v9M18 11v9"/>','Remove']
].map(a=>a?btn(...a):'<hr>').join('')+'<span class="flex-fill"></span>'+btn('<path d="M15 3l3 7 8 1-6 5 2 8-7-4-7 4 2-8-6-5 8-1z"/>','Favorites')+btn('<path d="M15 4l11 6-11 6-11-6zM4 14l11 6 11-6M4 18l11 6 11-6"/>','Objects')+'<span style="height:22px"></span>');
const bulb='<path d="M11 19q0-3-2-5a7 7 0 1 1 12 0q-2 2-2 5zM12 22h6M12 25h6M15 18v-6M12 12h6"/>';
add('right',[
['<rect x="3" y="2" width="24" height="24" rx="4"/><path d="M7 8h16M7 12h16M7 16h16M7 20h16"/>','Watchlist'],
['<circle cx="15" cy="13" r="10"/><path d="M15 7v7H9M3 7a5 5 0 0 1 7-6M20 1a5 5 0 0 1 7 6M8 21l-2 4M22 21l2 4"/>','Alerts'],
['<path d="M7 3h16q4 0 4 4v15q0 4-4 4H8q-4 0-4-4V8M4 0v6M0 3h8M8 8h15v3H8zM8 16h7M19 16h5M8 20h7M19 20h5"/>','Details'],
['<path d="M16 2q0 8 4 5 8 9 2 15-7 7-14 1-6-8 3-14 4-3 5-7z"/>','Hotlists'],
['<rect x="3" y="3" width="24" height="23" rx="3"/><path d="M9 0v6M21 0v6"/><g><circle cx="9" cy="11" r="1.500"/><circle cx="15" cy="11" r="1.500"/><circle cx="21" cy="11" r="1.500"/><circle cx="9" cy="16" r="1.500"/><circle cx="15" cy="16" r="1.500"/><circle cx="21" cy="16" r="1.500"/><circle cx="9" cy="21" r="1.500"/><circle cx="15" cy="21" r="1.500"/></g>','Calendar'],
[bulb,'Ideas'],0,
['<path d="M10 7V4q0-2 2-2h14v20l-5-5M3 8h18v12H8l-5 6z"/>','Public chats'],
['<path d="M3 3h19v14H8l-5 5zM22 7h5v19l-6-6H10v-3"/>','Private chats'],
[bulb+'<path d="M5 7q-3 5 0 10M2 5q-4 7 0 14M25 7q3 5 0 10M28 5q4 7 0 14"/>','Stream'],
['<path d="M5 22q3-2 3-10 1-7 7-9 6 2 7 9 0 8 3 10zM12 23q3 4 6 0"/>','Notifications'],0,
['<path stroke-width="4" d="M1 21L9 12 17 20M13 8L20 15 29 5"/><path stroke="#fff" stroke-width="2" d="M2 20L9 12 16 19M14 9L20 15 28 6"/>','Order panel'],
['<rect x="17" y="3" width="3" height="3"/><rect x="23" y="3" width="5" height="3"/><rect x="17" y="9" width="3" height="3"/><rect x="23" y="9" width="5" height="3"/><rect x="4" y="16" width="7" height="3"/><rect x="17" y="16" width="3" height="3"/><rect x="4" y="22" width="7" height="3"/><rect x="17" y="22" width="3" height="3"/>','Depth']
].map(a=>a?btn(...a):'<hr>').join('')+'<span class="flex-fill"></span>'+btn('<circle cx="15" cy="14" r="12.500"/><path d="M10 11q0-5 5-5 6 1 5 5-1 3-5 4v3M15 20v2"/>','Help'));
// axes and grid
let s='';
for(let i=0;i<15;i++)s+=`<p>${(1.145-i/1000).toFixed(5)}</p>`;
$('scale').insertAdjacentHTML('afterbegin',s);
add('times',['03:00','06:00','09:00','12:00','15:00','18:00','21:00','<b>21</b>','03:00','06:00','09:00','12:00','15:00','18:00','21:00','<b>22</b>','03:00','06:00','09:00'].map(t=>`<span>${t}</span>`).join(''));
s='';
for(let i=0;i<19;i++)s+=`<path d="M${Math.round(78+95.650*i)} 97V862" stroke="#e1ecf2"/>`;
for(let i=0;i<15;i++)s+=`<path d="M62 ${129+49*i}H1802" stroke="#e1ecf2"/>`;
add('grid',s);
// candles: x, high, body top, body bottom, low, kind
const sets=[[60,440,`10 555 555 572 575 g,28 548 551 556 578 g,50 538 545 551 556 g,74 540 545 580 582 r,100 568 578 582 592 r,123 572 578 582 590 g,147 568 575 600 604 r,170 590 597 603 606 r,192 590 595 600 606 g,218 580 587 603 605 g,241 580 588 592 600 r,265 565 573 592 597 g,291 570 573 602 604 r,315 592 598 602 612 g,340 585 596 600 605 g,363 590 596 600 606 r,387 570 575 600 604 g,410 565 572 579 582 r,433 548 555 580 583 g,457 553 557 580 582 r,482 565 572 577 580 g,506 538 570 580 600 r,530 560 566 580 585 g,552 487 520 530 545 g,575 556 563 650 657 r,601 600 613 650 677 g,625 520 558 612 618 d,648 555 558 612 635 r,671 600 613 745 747 r,697 635 642 745 750 g,721 597 631 640 657 g,743 575 579 632 642 g,767 545 558 580 615 g,793 500 550 560 575 g,816 510 522 553 570 g,838 468 515 525 540 g,862 480 509 515 520 g,888 480 510 532 540 r,912 485 508 530 540 g,935 487 510 530 535 r,958 470 488 532 538 g,985 415 420 490 495 g,1007 360 373 420 425 g,1030 310 360 373 378 g,1054 305 325 362 370 g,1080 328 330 475 480 r,1103 423 472 490 493 r,1127 378 410 490 495 g,1150 402 410 430 492 r,1176 375 405 428 440 g,1198 375 402 450 455 r,1222 380 400 448 455 g,1245 328 400 412 425 r,1271 358 408 432 458 r,1295 368 410 430 440 g,1318 397 410 448 455 r,1342 422 447 487 490 r,1364 482 485 498 592 r,1390 467 498 506 568 r,1413 457 462 508 512 g,1437 445 463 530 553 r,1460 465 528 543 545 r,1486 487 535 540 545 g,1509 498 508 550 575 g,1532 490 508 557 560 r,1556 430 430 555 558 g`],
[560,90,`82 700 700 1480 1480 d,105 445 463 700 745 g,128 170 340 465 470 g,151 170 173 343 350 g,177 120 173 275 335 r,201 275 275 550 552 b,223 280 372 550 602 g,247 265 358 373 450 g,272 350 360 510 512 r,296 508 510 627 678 r,319 558 626 630 665 r,343 625 628 660 707 r,369 618 632 660 685 g,392 615 630 634 648 g,415 525 575 632 640 g,438 492 494 577 580 g,465 443 492 523 525 r,487 490 510 525 528 g,512 480 510 527 530 r,534 520 528 545 547 r,560 462 468 545 547 g,583 440 468 474 518 r,606 422 447 475 480 g,628 402 437 447 463 g,652 360 437 480 484 r,679 428 437 482 492 g,702 347 420 440 483 g,725 365 380 420 425 g,748 378 380 452 462 r,775 383 387 452 455 g,798 305 342 387 395 g,820 340 342 393 395 b,845 350 353 392 412 g,870 350 353 388 395 r`],
[840,130,`53 268 268 308 320 r,77 300 305 322 345 r,99 280 312 320 338 g,125 305 308 338 388 r,148 335 337 388 390 r,172 353 380 388 395 g,196 380 380 388 435 r,222 365 372 388 392 g,246 372 374 397 400 r,268 345 350 398 402 g,291 340 350 420 425 r,317 418 420 450 452 r,341 408 430 452 460 g,364 415 430 440 455 r,387 425 440 458 462 r,413 420 450 460 465 g,437 368 390 450 455 g,460 370 386 392 400 g,483 333 384 388 415 g,510 305 308 383 386 g,532 295 308 383 385 r,555 375 383 540 553 r,578 532 538 627 640 r,601 618 623 810 835 r,628 750 792 798 820 g,651 750 753 808 830 g,674 670 690 755 760 g,697 667 690 712 715 r,723 663 687 710 725 g,746 630 645 688 690 g,769 633 643 718 722 r,793 700 717 765 768 r,819 757 763 790 793 r`]];
const col={g:'#53b987',r:'#eb4d5c',d:'#800000',b:'#0000ff'};
add('candles','<rect x="332" y="146" width="25" height="54" fill="red"/><rect x="380" y="146" width="33" height="54" fill="red"/><rect x="587" y="146" width="35" height="54" fill="red"/><rect x="762" y="146" width="17" height="54" fill="red"/>'+sets.map(([ox,oy,d])=>d.split(',').map(r=>{const a=r.trim().split(' '),[x,h,t,b,l]=a.map(v=>v/3);const X=Math.round(ox+x);return `<path d="M${X} ${oy+h}V${oy+l}" stroke="#222"/><rect x="${X-2.500}" y="${oy+t}" width="5" height="${b-t}" fill="${col[a[5]]}"/>`}).join('')).join(''));
// annotations
const T=(x,y,t,c,a)=>`<text x="${x}" y="${y}" fill="${c}" text-anchor="${a||'middle'}">${t}</text>`;
s='';
[[68,653,0],[139,661,0],[243,654,1],[275,673,0],[307,680,0],[538,647,0],[569,649,0],[697,325,0],[753,286,0],[937,293,0],[992,295,0]].forEach(([x,y,r])=>{const c=r?'#f44':'#4a9c4e';s+=T(x,y,'FB',c)+T(x,y+13,'U',c)+T(x,y+26,'Y',c)+T(x,y-12,'↕',c)});
[[897,17],[938,49],[1032,18]].forEach(([x,w])=>s+=`<rect x="${x}" y="761" width="${w}" height="54" fill="#808000"/>`);
const dtc=(x,y)=>s+=T(x,y,'D','#000')+T(x+2,y+13,'T','#000')+T(x+2,y+26,'C','#000');
[906,947,954,970,979,1041].forEach(x=>dtc(x,772));
[341,347,390,396,402,597,604,770].forEach(x=>dtc(x,157));
const pin=(x,y,c)=>s+=`<path d="M${x} ${y}h4v2l-4 2z" stroke="${c}" stroke-width="1.5"/>`;
for(let x=338;x<413;x+=8)pin(x,141,'#ee4455');
[610,618,626,634,642,650,768,775].forEach(x=>pin(x,141,'#ee4455'));
[903,952,960,968,976,1038,1046,1054].forEach(x=>pin(x,815,'#4a9c4e'));
[[620,113,'OVER'],[608,119,'OVER'],[624,126,'BOUGHT'],[612,131,'BOUGHT'],[603,144,'BOUGHT'],[594,219,'OVER'],[597,232,'BOUGHT'],[598,126,'OVER']].forEach(a=>s+=T(...a,'#333'));
[[396,534],[403,539],[411,534],[340,591],[348,593],[356,596],[364,598],[372,596],[635,178],[642,178],[651,203]].forEach(([x,y])=>s+=`<circle cx="${x}" cy="${y}" r="2" fill="red"/>`);
[[1040,416],[1049,412],[1057,414],[1113,401],[945,289],[953,291],[961,289],[969,292],[978,293],[905,277],[914,272],[898,271],[937,276]].forEach(([x,y])=>s+=`<circle cx="${x}" cy="${y}" r="2" fill="#3a48d8"/>`);
add('notes',s);
const flag=(x,c)=>`<circle cx="${x}" cy="845" r="12" fill="#fff" stroke="${c}" stroke-width="2"/><circle cx="${x}" cy="845" r="9" fill="#eee"/><path d="M${x-8} 849h16M${x} 844h9M${x} 839h8M${x-5} 853h10" stroke="#e2596b" stroke-width="3"/><path d="M${x-9} 846v-3q2-7 9-7v10z" style="fill:#3f86d8"/>`;
add('events',flag(1178,'#f2a24a')+flag(1225,'#f0c04a')+flag(1242,'#f0904a')+`<circle cx="1257" cy="845" r="12" fill="#fff" stroke="#ea4b60" stroke-width="2"/><circle cx="1257" cy="845" r="9" fill="#2f3b86"/><circle cx="1257" cy="845" r="5" fill="none" stroke="#e8b62c" stroke-width="2" stroke-dasharray="1 3"/><rect x="1182" y="831" width="14" height="12" fill="#fff"/><rect x="1247" y="831" width="11" height="12" fill="#fff"/>`+T(1188,841,'<tspan style="font-size:11px">25</tspan>','#222')+T(1252,841,'<tspan style="font-size:11px">2</tspan>','#222'));
</script>
</body>
</html>
